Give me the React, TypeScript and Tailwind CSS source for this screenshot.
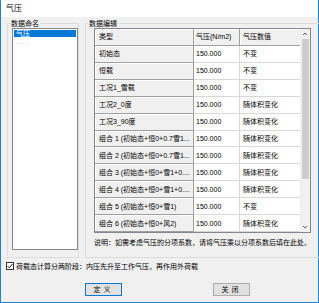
import React from "react";

const font = { fontFamily: '"Liberation Sans", "Noto Sans CJK SC", sans-serif' };

const rows: [string, string][] = [
  ["初始态", "不变"],
  ["恒载", "不变"],
  ["工况1_雪载", "不变"],
  ["工况2_0度", "随体积变化"],
  ["工况3_90度", "随体积变化"],
  ["组合 1 (初始态+恒0+0.7雪1...", "随体积变化"],
  ["组合 2 (初始态+恒0+0.7雪1...", "随体积变化"],
  ["组合 3 (初始态+恒0+雪1+0....", "随体积变化"],
  ["组合 4 (初始态+恒0+雪1+0....", "随体积变化"],
  ["组合 5 (初始态+恒0+雪1)", "不变"],
  ["组合 6 (初始态+恒0+风2)", "随体积变化"],
];

export default function App() {
  return (
    <div
      className="flex h-[303px] w-[319px] flex-col border-x border-b border-[#1883d7] bg-[#f0f0f0] text-[7px] leading-none text-black"
      style={font}
    >
      {/* 标题栏 */}
      <div className="flex h-[17px] items-center bg-white pl-[5px] text-[8px]">气压</div>

      {/* 两个分组框 */}
      <div className="mt-[6px] flex gap-[6px] pl-[6px] pr-[3px]">
        {/* 数据命名 */}
        <div className="relative h-[235px] w-[80px] border border-[#dcdcdc]">
          <span className="absolute left-[2px] top-[-4px] bg-[#f0f0f0] px-[1px]">数据命名</span>
          <div className="ml-[4px] mt-[4px] h-[222px] w-[66px] border border-[#828790] bg-white p-[1px]">
            <div className="h-[7px] bg-[#0078d7] pl-[2px] text-white leading-[7px]">气压</div>
            <div className="mt-[3px] pl-[3px] text-[#a0a0a0] tracking-[2px]">···</div>
          </div>
        </div>

        {/* 数据编辑 */}
        <div className="relative flex h-[235px] flex-1 flex-col border border-[#dcdcdc] px-[8px]">
          <span className="absolute left-[2px] top-[-4px] bg-[#f0f0f0] px-[1px]">数据编辑</span>
          <div className="mt-[4px] flex h-[205px] border border-[#828790] bg-white">
            <div className="flex flex-1 flex-col">
              <div className="flex h-[17px]">
                <div className="flex w-[99px] items-center border-b border-r border-[#a0a0a0] bg-[#f0f0f0] pl-[4px] shadow-[inset_1px_1px_0_#fff]">类型</div>
                <div className="flex w-[46px] items-center border-b border-r border-[#a0a0a0] bg-[#f0f0f0] pl-[2px] shadow-[inset_1px_1px_0_#fff]">气压(N/m2)</div>
                <div className="flex flex-1 items-center border-b border-[#a0a0a0] bg-[#f0f0f0] pl-[3px] shadow-[inset_1px_1px_0_#fff]">气压数值</div>
              </div>
              {rows.map(([name, mode]) => (
                <div key={name} className="flex h-[17px]">
                  <div className="flex w-[99px] items-center overflow-hidden whitespace-nowrap border-b border-r border-[#a0a0a0] bg-[#f0f0f0] pl-[4px] shadow-[inset_1px_1px_0_#fff]">
                    {name}
                  </div>
                  <div className="flex w-[46px] items-center border-b border-r border-[#d8d8d8] pl-[2px]">150.000</div>
                  <div className="flex flex-1 items-center border-b border-[#d8d8d8] pl-[3px]">{mode}</div>
                </div>
              ))}
            </div>
            {/* 滚动条 */}
            <div className="flex w-[10px] flex-col items-center bg-[#f0f0f0]">
              <svg width="10" height="10" viewBox="0 0 10 10" className="shrink-0">
                <path d="M3 6 L5 4 L7 6" fill="none" stroke="#606060" strokeWidth="1" />
              </svg>
              <div className="h-[140px] w-[7px] bg-[#cdcdcd]" />
              <div className="flex-1" />
              <svg width="10" height="10" viewBox="0 0 10 10" className="shrink-0">
                <path d="M3 4 L5 6 L7 4" fill="none" stroke="#606060" strokeWidth="1" />
              </svg>
            </div>
          </div>
          <div className="mt-[6px] whitespace-nowrap pl-[-1px]">说明：如需考虑气压的分项系数，请将气压乘以分项系数后填在此处。</div>
        </div>
      </div>

      {/* 复选框 */}
      <div className="mt-[4px] flex items-center gap-[2px] pl-[5px]">
        <div className="flex h-[8px] w-[8px] items-center justify-center border border-[#333] bg-white">
          <svg width="6" height="6" viewBox="0 0 6 6">
            <path d="M0.5 3 L2.3 4.8 L5.5 1" fill="none" stroke="#222" strokeWidth="1" />
          </svg>
        </div>
        <span>荷载态计算分两阶段：内压先升至工作气压，再作用外荷载</span>
      </div>

      {/* 按钮 */}
      <div className="mt-[13px] flex">
        <button className="ml-[84px] flex h-[13px] w-[37px] items-center justify-center border border-[#0078d7] bg-[#e1e1e1] tracking-[3px]">
          定义
        </button>
        <button className="ml-[91px] flex h-[13px] w-[37px] items-center justify-center border border-[#adadad] bg-[#e1e1e1] tracking-[3px]">
          关闭
        </button>
      </div>
    </div>
  );
}
